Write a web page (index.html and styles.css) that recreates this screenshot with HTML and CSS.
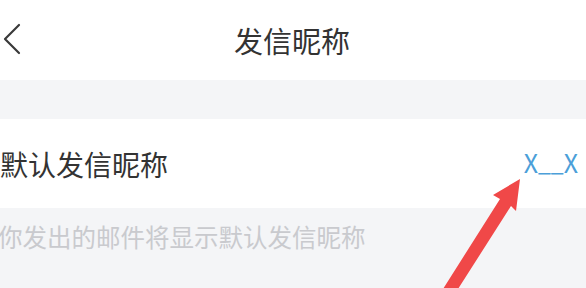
FILE: index.html
```
<!DOCTYPE html>
<html lang="zh-CN">
<head>
<meta charset="utf-8">
<title>发信昵称</title>
<link rel="stylesheet" href="styles.css">
</head>
<body>
<div class="page">
  <header class="topbar">
    <svg class="back" width="24" height="34" viewBox="0 0 24 34" aria-hidden="true">
      <polyline points="18,2 4,16 18,30" fill="none" stroke="#3a3a3a" stroke-width="2.2" stroke-linecap="round" stroke-linejoin="round"/>
    </svg>
    <h1 class="title">发信昵称</h1>
  </header>
  <div class="gap"></div>
  <div class="row">
    <span class="label">默认发信昵称</span>
    <span class="value">X<span class="under">__</span>X</span>
  </div>
  <div class="hint-area">
    <p class="hint">你发出的邮件将显示默认发信昵称</p>
  </div>
  <svg class="arrow" width="586" height="288" viewBox="0 0 586 288" aria-hidden="true">
    <polygon points="443,289 500,199 493,195 520,179 516,211 511,206 458,289" fill="#f04848"/>
  </svg>
</div>
</body>
</html>
```
FILE: styles.css
```
html, body {
  margin: 0;
  padding: 0;
}
body {
  width: 586px;
  height: 288px;
  overflow: hidden;
  background: #f4f5f7;
  font-family: "Noto Sans CJK SC", "Noto Sans", sans-serif;
}
.page {
  position: relative;
  width: 586px;
  height: 288px;
  overflow: hidden;
  display: flex;
  flex-direction: column;
}
.topbar {
  position: relative;
  height: 80px;
  background: #ffffff;
  display: flex;
  align-items: center;
  justify-content: center;
}
.back {
  position: absolute;
  left: 1px;
  top: 23px;
}
.title {
  margin: 0;
  font-size: 29px;
  font-weight: 400;
  line-height: 1;
  color: #333333;
  margin-left: -2px;
}
.gap {
  height: 39px;
  background: #f4f5f7;
}
.row {
  height: 89px;
  background: #ffffff;
  display: flex;
  align-items: center;
  justify-content: space-between;
}
.label {
  font-size: 28px;
  line-height: 1;
  color: #333333;
  margin-left: 0;
}
.value {
  font-size: 25px;
  line-height: 1;
  color: #4c9fd9;
  margin-right: 8px;
  margin-top: -2px;
}
.under {
  font-size: 23px;
  letter-spacing: 0;
  position: relative;
  top: -2px;
}
.hint-area {
  flex: 1;
  background: #f4f5f7;
  padding-top: 17px;
}
.hint {
  margin: 0 0 0 -2px;
  font-size: 24.5px;
  line-height: 1;
  color: #c9cace;
  white-space: nowrap;
}
.arrow {
  position: absolute;
  left: 0;
  top: 0;
}
```
